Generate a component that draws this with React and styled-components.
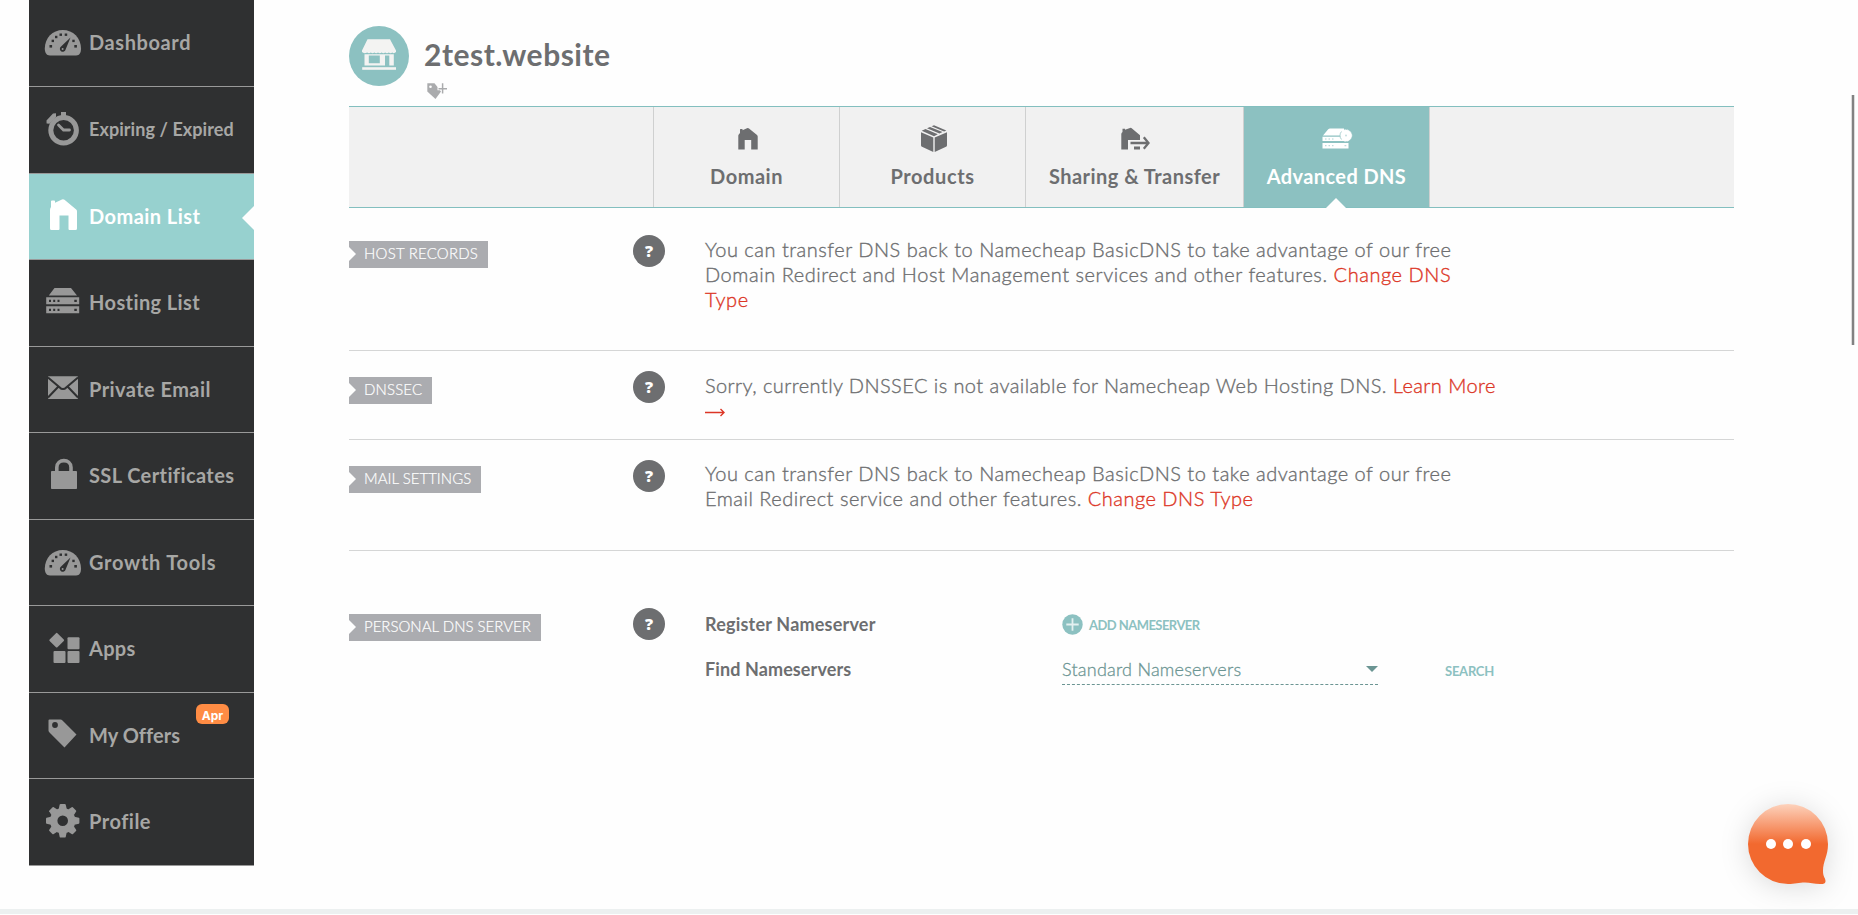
import styled, { createGlobalStyle } from "styled-components";

const GaugeIcon = () => (
    <Glyph viewBox="0 0 38 38">
        <path d="M6 31.5C2 31.5 .8 28 .8 24.500C.8 14 8.600 6 18.800 6S37 14 37 24.500C37 28 36 31.500 32 31.500Z" />
        <g fill="#2f3031">
            <path d="M26.500 13.500L21.600 25.500A2.900 2.900 0 1 1 16.800 22.800Z" />
            <rect x="5.500" y="21" width="2.600" height="2.600" />
            <rect x="7.600" y="15.700" width="2.400" height="2.400" />
            <rect x="11" y="11.800" width="2.400" height="2.400" />
            <rect x="15.500" y="9.500" width="2.500" height="2.400" />
            <rect x="20.700" y="9.500" width="2.500" height="2.400" />
            <rect x="28.300" y="15.700" width="2.400" height="2.400" />
            <rect x="30.300" y="21" width="2.600" height="2.600" />
        </g>
        <circle cx="18.600" cy="25" r="1" />
    </Glyph>
);

const TimerIcon = () => (
    <Glyph viewBox="0 0 38 38">
        <circle cx="19.600" cy="19.200" r="12.800" fill="none" stroke="currentColor" strokeWidth="5" />
        <path d="M17 1h5v5h-5zM2.500 9.500L9 2.500L12 2.300V6L5.500 12.800L2.600 12.500Z" />
        <path d="M14.500 14L19.500 19H25.500" fill="none" stroke="currentColor" strokeWidth="2.800" strokeLinecap="round" />
    </Glyph>
);

const HouseIcon = () => (
    <Glyph viewBox="0 0 38 38">
        <path d="M7 9V3.200Q7 2.500 8 2.500H10.300Q11 2.500 11 3.200V4.800L18 1.500Q19.200 .8 20.500 1.800L32.200 11.500Q33 12.200 33 13.500V30.500Q33 32 31.500 32H25.500Q24.500 32 24.500 31V17.500H15.500V31Q15.500 32 14.500 32H7.500Q6 32 6 30.500V12Q6 10.500 7 9Z" />
    </Glyph>
);

const ServerIcon = () => (
    <Glyph viewBox="0 0 38 38">
        <path d="M10.500 4H27L33 11.500H4.800ZM2.200 13.300H35.200V20.200H2.200ZM2.200 22.300H35.200V29.200H2.200Z" />
        <g fill="#2f3031">
            <path d="M5 15.700h2v2.200H5zM9.200 15.700h2v2.200h-2zM13.500 15.700h2v2.200h-2zM30.300 15.700h2.500v2.200h-2.500z" />
            <path d="M5 24.700h2v2.200H5zM9.200 24.700h2v2.200h-2zM13.500 24.700h2v2.200h-2zM30.300 24.700h2.500v2.200h-2.500z" />
        </g>
    </Glyph>
);

const MailIcon = () => (
    <Glyph viewBox="0 0 38 38">
        <rect x="4" y="5.300" width="30" height="22.700" rx=".8" />
        <path
            d="M4 6.500L15.500 16.200Q19 20 22.500 16.200L34 6.500M4 26.500L14 16M34 26.500L24 16"
            fill="none"
            stroke="#2f3031"
            strokeWidth="2"
        />
    </Glyph>
);

const LockIcon = () => (
    <Glyph viewBox="0 0 38 38">
        <rect x="7" y="14" width="26" height="18" rx=".8" />
        <path d="M12.800 15V10.500C12.800 1.300 27 1.300 27 10.500V15" fill="none" stroke="currentColor" strokeWidth="3.600" />
    </Glyph>
);

const AppsIcon = () => (
    <Glyph viewBox="0 0 38 38">
        <rect x="7.200" y="4.700" width="11" height="11" rx="1" transform="rotate(45 12.700 10.200)" />
        <rect x="23.500" y="7.200" width="12" height="12" rx="1" />
        <rect x="9.500" y="21" width="12" height="12" rx="1" />
        <rect x="23.500" y="21" width="12" height="12" rx="1" />
    </Glyph>
);

const TagIcon = () => (
    <Glyph viewBox="0 0 38 38">
        <path
            fillRule="evenodd"
            d="M5.500 2.500H16.500Q17.500 2.500 18.500 3.500L32.500 17.500L20.500 30.500L5.500 15.500Q4.500 14.500 4.500 13.500V3.500Q4.500 2.500 5.500 2.500ZM11 5.100A2.900 2.900 0 1 0 11 10.900A2.900 2.900 0 1 0 11 5.100Z"
        />
    </Glyph>
);

const GearIcon = () => (
    <Glyph viewBox="0 0 38 38">
        <circle cx="18.700" cy="17.700" r="9" fill="none" stroke="currentColor" strokeWidth="7.400" />
        {[0, 45, 90, 135].map((angle) => (
            <g key={angle} transform={`rotate(${angle} 18.700 17.700)`}>
                <path d="M14.700 6L15.700 1.500Q16 1 16.600 1H20.800Q21.400 1 21.700 1.500L22.700 6Z" />
                <path d="M14.700 29.400L15.700 33.900Q16 34.400 16.600 34.400H20.800Q21.400 34.400 21.700 33.900L22.700 29.400Z" />
            </g>
        ))}
    </Glyph>
);

const menu = [
    { label: "Dashboard", Icon: GaugeIcon, spacing: 0.6 },
    { label: "Expiring / Expired", Icon: TimerIcon, small: true, spacing: 0.07 },
    { label: "Domain List", Icon: HouseIcon, active: true, spacing: 0.45 },
    { label: "Hosting List", Icon: ServerIcon, spacing: 0.4 },
    { label: "Private Email", Icon: MailIcon, spacing: 0.43 },
    { label: "SSL Certificates", Icon: LockIcon, spacing: 0.4 },
    { label: "Growth Tools", Icon: GaugeIcon, spacing: 0.75 },
    { label: "Apps", Icon: AppsIcon, spacing: 0.3 },
    { label: "My Offers", Icon: TagIcon, badge: "Apr", spacing: 0.05 },
    { label: "Profile", Icon: GearIcon, spacing: 0.5 },
];

const Sidebar = () => (
    <SideNav>
        {menu.map(({ label, Icon, active, small, badge, spacing }) => (
            <SideItem key={label} $active={active}>
                <Icon />
                <SideLabel $small={small} $active={active} $spacing={spacing}>
                    {label}
                </SideLabel>
                {badge && <Badge>{badge}</Badge>}
            </SideItem>
        ))}
    </SideNav>
);

const TabHouse = () => (
    <svg width="34" height="30" viewBox="0 0 34 30" fill="currentColor">
        <path d="M9 9V5.500Q9 5 9.500 5H11.500V6.200L16 4.300Q17 3.700 18 4.500L26 11Q26.700 11.600 26.700 12.500V25.500H20.200V16H13.700V25.500H7.300V11.500Q7.300 10.500 9 9Z" />
    </svg>
);

const TabBox = () => (
    <svg width="34" height="30" viewBox="0 0 34 30" fill="currentColor">
        <path d="M4 8.200L16.300 13.500V28L5 22.800Q4 22.300 4 21.300ZM30 8.200L17.700 13.500V28L29 22.800Q30 22.300 30 21.300Z" />
        <path d="M4.700 6.800L8.500 5L20.800 10.300L17 12.200ZM10 4.300L13 2.900L25.500 8.100L22.400 9.500ZM14.600 2.200L17 1.200L29.300 6.500L27.100 7.400Z" />
    </svg>
);

const TabTransfer = () => (
    <svg width="34" height="30" viewBox="0 0 34 30" fill="currentColor">
        <path d="M3.500 8V4.800H6V5.800L11 4Q12 3.500 13 4.400L21 11.300V16H9V25.500H2.300V10Q2.300 9 3.500 8ZM15 22.500H21V25.500H15Z" />
        <path d="M11.500 19H29M24.800 13.200L29.500 19L24.800 24.700" fill="none" stroke="currentColor" strokeWidth="2.300" />
    </svg>
);

const TabServer = () => (
    <svg width="34" height="30" viewBox="0 0 34 30" fill="currentColor">
        <path d="M7 5.500Q8 4.600 9 4.600H23V11.500H2ZM1.500 12.700H19L22 16L27.500 16V17H1.500ZM1.500 19H27.500V24.400H1.500Z" />
        <circle cx="25" cy="11.500" r="5.700" strokeDasharray="2 1" stroke="currentColor" strokeWidth=".8" />
        <path
            d="M20.500 7.500A6 6 0 0 0 20.500 15.500M4 15h1.500M7.500 15H9M11 15h1.500M4 21.700h1.500M7.500 21.700H9M11 21.700h1.500M23.500 21.700h1.800"
            fill="none"
            stroke="#8cc1c1"
            strokeWidth="1"
            strokeOpacity=".7"
        />
        <circle cx="25" cy="11.500" r="1" fill="#c5e0e0" />
    </svg>
);

const StoreIcon = () => (
    <svg width="60" height="60" viewBox="0 0 60 60">
        <circle cx="30" cy="30" r="30" fill="#8cc1c1" />
        <g fill="#f3f3f2">
            <path d="M18.500 13.200H41L47 24.500V26Q45 28 43.300 26.500Q41.500 28 39.800 26.500Q38 28 36.200 26.500Q34.400 28 32.600 26.500Q30.800 28 29 26.500Q27.200 28 25.400 26.500Q23.600 28 21.800 26.500Q20 28 18.200 26.500Q15 28 13 26V24.500Z" />
            <path d="M15.500 28.200H44.800V39.500H40.300V29.500H36V39.500H15.500ZM19.800 29.500V37.300H30.800V29.500Z" fillRule="evenodd" />
            <rect x="13.200" y="41.200" width="33.800" height="2.600" />
        </g>
    </svg>
);

const AddTagIcon = () => (
    <svg width="21" height="17" viewBox="0 0 21 17">
        <path d="M.3 .3H7.500L14 8.500L8.500 16L.3 8.500Z" fill="#aaabad" />
        <circle cx="3.500" cy="3.700" r="1.300" fill="#fff" />
        <path d="M15.600 .6V11M10.500 5.800H20.200" stroke="#fff" strokeWidth="3" />
        <path d="M15.600 .3V10.600M11.500 5.800H20" stroke="#aaabad" strokeWidth="1.500" />
    </svg>
);

const tabs = [
    { label: "Domain", Icon: TabHouse, width: 186, spacing: 0.5 },
    { label: "Products", Icon: TabBox, width: 186, spacing: 0.6 },
    { label: "Sharing & Transfer", Icon: TabTransfer, width: 218, spacing: 0.47 },
    { label: "Advanced DNS", Icon: TabServer, width: 186, active: true, spacing: 0.4 },
];

const Tabs = () => (
    <TabBar>
        {tabs.map(({ label, Icon, width, active, spacing }) => (
            <Tab key={label} $width={width} $active={active} $spacing={spacing}>
                <Icon />
                {label}
            </Tab>
        ))}
    </TabBar>
);

const Section = ({ title, spacing, top, height, bodyTop = 2, last, children }) => (
    <Row $top={top} $height={height} $last={last}>
        <LabelCell>
            <Ribbon $spacing={spacing}>{title}</Ribbon>
        </LabelCell>
        <Help>?</Help>
        <Body $top={bodyTop}>{children}</Body>
    </Row>
);

const ChatBubble = () => (
    <Chat>
        <svg width="80" height="80" viewBox="0 0 80 80">
            <defs>
                <linearGradient id="bubble" x1="0" y1="0" x2="0" y2="1">
                    <stop offset="0" stopColor="#fdd2bc" />
                    <stop offset=".5" stopColor="#f2692f" />
                </linearGradient>
            </defs>
            <path
                d="M40 0A40 40 0 0 1 80 40C80 52 75 57 75 67C75 73 77.500 74 77.500 77C77.500 79.500 76 80 72 80C66 80 62 78.500 57 78.500C51 78.500 47 80 40 80A40 40 0 0 1 40 0Z"
                fill="url(#bubble)"
            />
            <g fill="#fff">
                <circle cx="23" cy="40" r="5" />
                <circle cx="40" cy="40" r="5" />
                <circle cx="58" cy="40" r="5" />
            </g>
        </svg>
    </Chat>
);

const App = () => {
    return (
        <Page>
            <GlobalStyle />
            <Columns>
                <Sidebar />
                <Main>
                    <Header>
                        <StoreIcon />
                        <TitleBox>
                            <Title>2test.website</Title>
                            <AddTagIcon />
                        </TitleBox>
                    </Header>
                    <Tabs />
                    <Section title="HOST RECORDS" spacing={0.22} top={27} height={143}>
                        <Line $spacing={0.5}>You can transfer DNS back to Namecheap BasicDNS to take advantage of our free</Line>
                        <Line $spacing={0.54}>
                            Domain Redirect and Host Management services and other features. <Link>Change DNS</Link>
                        </Line>
                        <Line $spacing={0.6}>
                            <Link>Type</Link>
                        </Line>
                    </Section>
                    <Section title="DNSSEC" spacing={0.15} top={20} height={89}>
                        <Line $spacing={0.43}>
                            Sorry, currently DNSSEC is not available for Namecheap Web Hosting DNS. <Link>Learn More</Link>
                        </Line>
                        <ArrowLine>
                            <svg width="20" height="9" viewBox="0 0 20 9" fill="none" stroke="#dc3626" strokeWidth="1.400">
                                <path d="M0 4.500H18.500M15.500 1L19 4.500L15.500 8" />
                            </svg>
                        </ArrowLine>
                    </Section>
                    <Section title="MAIL SETTINGS" spacing={0.02} top={20} height={111} bodyTop={1}>
                        <Line $spacing={0.5}>You can transfer DNS back to Namecheap BasicDNS to take advantage of our free</Line>
                        <Line $spacing={0.5}>
                            Email Redirect service and other features. <Link>Change DNS Type</Link>
                        </Line>
                    </Section>
                    <Section title="PERSONAL DNS SERVER" spacing={0} top={57} height={200} last>
                        <Form>
                            <FieldName $spacing={0.2}>Register Nameserver</FieldName>
                            <AddButton>
                                <svg width="21" height="21" viewBox="0 0 21 21">
                                    <circle cx="10.500" cy="10.500" r="10.200" fill="#8cc1c1" />
                                    <path d="M10.500 4.300V16.700M4.300 10.500H16.700" stroke="#e3f0f0" strokeWidth="1.800" />
                                </svg>
                                ADD NAMESERVER
                            </AddButton>
                            <span />
                            <FieldName $spacing={0.1}>Find Nameservers</FieldName>
                            <Select>
                                Standard Nameservers
                                <Caret />
                            </Select>
                            <SearchButton>SEARCH</SearchButton>
                        </Form>
                    </Section>
                </Main>
            </Columns>
            <Footer />
            <ScrollThumb />
            <ChatBubble />
        </Page>
    );
};

const GlobalStyle = createGlobalStyle`
    * {
        box-sizing: border-box;
    }
    body {
        margin: 0;
        background-color: #fefefe;
        font-family: Lato, "Open Sans", sans-serif;
        overflow: hidden;
    }
    button {
        border: none;
        padding: 0;
        background: none;
        font-family: inherit;
        cursor: pointer;
    }
`;

const Page = styled.div`
    position: relative;
    height: 915px;
    display: flex;
    flex-direction: column;
`;

const Columns = styled.div`
    display: flex;
    height: 909px;
    padding-left: 29px;
`;

const SideNav = styled.nav`
    width: 225px;
    display: flex;
    flex-direction: column;
`;

const Glyph = styled.svg`
    width: 38px;
    height: 38px;
    flex-shrink: 0;
    fill: currentColor;
`;

const SideItem = styled.a`
    position: relative;
    display: flex;
    gap: 7px;
    height: 86px;
    flex-shrink: 0;
    padding: 24px 0 0 15px;
    border-bottom: 1px solid #999;
    background-color: ${(props) => (props.$active ? "#97d1cf" : "#2f3031")};
    color: ${(props) => (props.$active ? "#fff" : "#989898")};
    &:first-child,
    &:nth-child(even) {
        height: 87px;
    }
    &::after {
        content: "";
        display: ${(props) => (props.$active ? "block" : "none")};
        position: absolute;
        right: 0;
        top: 32px;
        border: 12px solid transparent;
        border-right-color: #fefefe;
        border-left: none;
    }
`;

const SideLabel = styled.span`
    margin-top: 6px;
    font-size: ${(props) => (props.$small ? "18px" : "20px")};
    line-height: 24px;
    font-weight: bold;
    letter-spacing: ${(props) => props.$spacing}px;
    white-space: nowrap;
    color: ${(props) => (props.$active ? "#fff" : "#a7a7a5")};
`;

const Badge = styled.span`
    position: absolute;
    left: 167px;
    top: 11px;
    width: 33px;
    height: 20px;
    border-radius: 6px;
    background-color: #ff8c44;
    color: #fff;
    font: bold 12px/23px Inter, sans-serif;
    text-align: center;
`;

const Main = styled.main`
    width: 1385px;
    margin-left: 95px;
    color: #6d6e70;
`;

const Header = styled.header`
    display: flex;
    height: 106px;
    padding-top: 26px;
    gap: 15px;
`;

const TitleBox = styled.div`
    display: flex;
    flex-direction: column;
    svg {
        margin: 1px 0 0 3px;
    }
`;

const Title = styled.h1`
    margin: 10px 0 0;
    height: 46px;
    font-size: 30px;
    line-height: 36px;
    font-weight: bold;
    letter-spacing: 0.5px;
`;

const TabBar = styled.nav`
    display: flex;
    height: 102px;
    padding-left: 304px;
    border-top: 1px solid #83bfbf;
    border-bottom: 1px solid #83bfbf;
    background-color: #f1f1f1;
`;

const Tab = styled.a`
    position: relative;
    display: flex;
    flex-direction: column;
    align-items: center;
    gap: 10px;
    width: ${(props) => props.$width}px;
    padding-top: 17px;
    border-left: 1px solid #cfd0d0;
    background-color: ${(props) => (props.$active ? "#8cc1c1" : "transparent")};
    color: ${(props) => (props.$active ? "#fff" : "#6d6e70")};
    font-size: 20px;
    line-height: 25px;
    font-weight: bold;
    letter-spacing: ${(props) => props.$spacing}px;
    white-space: nowrap;
    svg {
        margin-left: 3px;
    }
    &:last-child {
        width: 187px;
        border-right: 1px solid #cfd0d0;
    }
    &::after {
        content: "";
        display: ${(props) => (props.$active ? "block" : "none")};
        position: absolute;
        left: 82px;
        bottom: -1px;
        border: 10px solid transparent;
        border-bottom-color: #fefefe;
        border-top: none;
    }
`;

const Row = styled.section`
    display: flex;
    align-items: flex-start;
    height: ${(props) => props.$height}px;
    padding-top: ${(props) => props.$top}px;
    border-bottom: ${(props) => (props.$last ? "none" : "1px solid #d5d6d6")};
`;

const LabelCell = styled.div`
    display: flex;
    width: 284px;
    padding-top: 6px;
`;

const Ribbon = styled.span`
    position: relative;
    height: 27px;
    padding: 0 10px 0 15px;
    background-color: #abacb0;
    color: #fff;
    font-size: 15px;
    line-height: 24px;
    font-weight: 300;
    -webkit-text-stroke: 0.2px;
    letter-spacing: ${(props) => props.$spacing}px;
    white-space: nowrap;
    &::before {
        content: "";
        position: absolute;
        left: 0;
        top: 6px;
        border: 7px solid transparent;
        border-left-color: #fefefe;
        border-right: none;
    }
`;

const Help = styled.span`
    width: 32px;
    height: 32px;
    border-radius: 50%;
    background-color: #6d6e70;
    color: #fff;
    font: 800 16px/33px "Open Sans", sans-serif;
    text-align: center;
`;

const Body = styled.div`
    margin-left: 40px;
    padding-top: ${(props) => props.$top}px;
`;

const Line = styled.p`
    margin: 0;
    height: 25px;
    font-size: 20px;
    line-height: 25px;
    font-weight: 300;
    -webkit-text-stroke: 0.35px;
    letter-spacing: ${(props) => props.$spacing}px;
    white-space: pre;
`;

const Link = styled.a`
    color: #dc3626;
`;

const ArrowLine = styled.div`
    display: flex;
    align-items: center;
    height: 29px;
`;

const Form = styled.div`
    display: grid;
    grid-template-columns: 357px 316px 52px;
    grid-template-rows: 28px 45px;
    padding-top: 3px;
`;

const FieldName = styled.span`
    align-self: end;
    height: 30px;
    font-size: 18px;
    line-height: 26px;
    font-weight: bold;
    letter-spacing: ${(props) => props.$spacing}px;
    white-space: nowrap;
`;

const AddButton = styled.button`
    display: flex;
    gap: 6px;
    height: 22px;
    padding-top: 1px;
    color: #8cc1c1;
    font-size: 13px;
    line-height: 23px;
    font-weight: bold;
    letter-spacing: -0.55px;
    white-space: nowrap;
`;

const Select = styled.div`
    display: flex;
    align-items: center;
    justify-content: space-between;
    align-self: end;
    height: 31px;
    margin-bottom: 1px;
    padding-bottom: 1px;
    border-bottom: 1px dashed #6b9593;
    color: #6b9593;
    font-size: 18px;
    line-height: 26px;
    font-weight: 300;
    -webkit-text-stroke: 0.3px;
    letter-spacing: 0.23px;
`;

const Caret = styled.span`
    border: 6px solid transparent;
    border-top-color: #6b9593;
    border-bottom: none;
`;

const SearchButton = styled.button`
    align-self: end;
    height: 30px;
    margin-left: 67px;
    color: #8cc1c1;
    font-size: 13px;
    line-height: 23px;
    font-weight: bold;
    letter-spacing: -0.25px;
`;

const Footer = styled.footer`
    height: 5px;
    background-color: #ecf0f0;
`;

const ScrollThumb = styled.div`
    position: absolute;
    left: 1851px;
    top: 95px;
    width: 4px;
    height: 250px;
    border: solid #dcdcdc;
    border-width: 0 1px;
    background-color: #828282;
`;

const Chat = styled.button`
    position: absolute;
    left: 1748px;
    top: 804px;
    width: 80px;
    height: 80px;
    svg {
        overflow: visible;
        filter: drop-shadow(0 3px 14px rgba(0, 0, 0, 0.14));
    }
`;

export default App;
